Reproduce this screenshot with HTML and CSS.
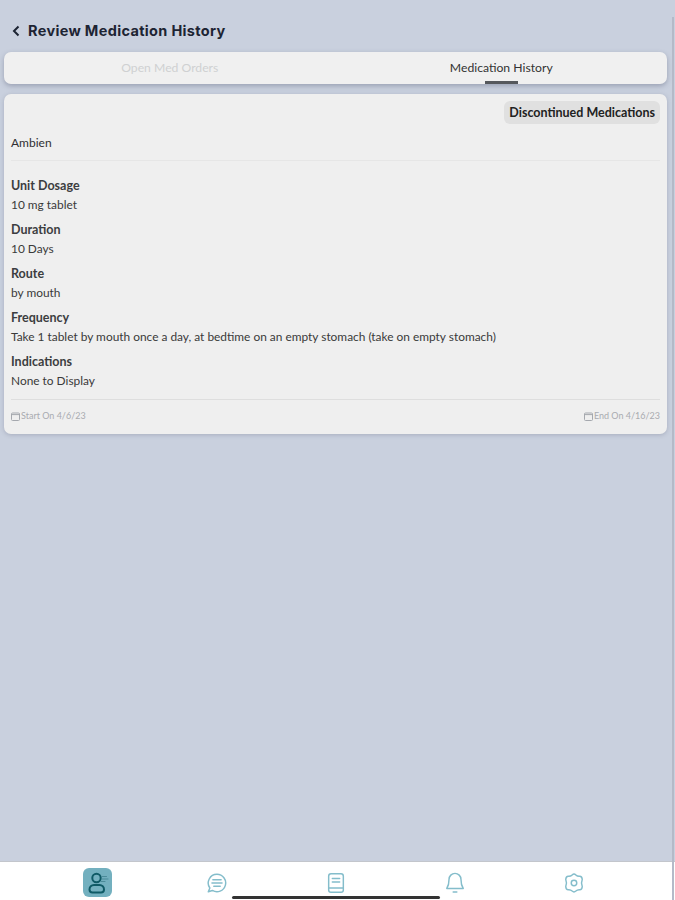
FILE: index.html
```html
<!DOCTYPE html>
<html lang="en">
<head>
  <meta charset="UTF-8" />
  <meta name="viewport" content="width=device-width, initial-scale=1.0" />
  <title>Review Medication History</title>
  <link rel="stylesheet" href="styles.css">
</head>
<body>
  <div class="screen">
    <header class="page-header">
      <svg class="back-icon" viewBox="0 0 10 12" width="10" height="12"><path d="M7.5 1.5 3 6l4.5 4.5" /></svg>
      <h1>Review Medication History</h1>
    </header>

    <nav class="tabs">
      <div class="tab">Open Med Orders</div>
      <div class="tab active">Medication History</div>
    </nav>

    <section class="med-card">
      <div class="card-top">
        <span class="status-pill">Discontinued Medications</span>
      </div>
      <div class="med-name">Ambien</div>

      <div class="details">
        <div class="field">
          <h3>Unit Dosage</h3>
          <p>10 mg tablet</p>
        </div>
        <div class="field">
          <h3>Duration</h3>
          <p>10 Days</p>
        </div>
        <div class="field">
          <h3>Route</h3>
          <p>by mouth</p>
        </div>
        <div class="field">
          <h3>Frequency</h3>
          <p>Take 1 tablet by mouth once a day, at bedtime on an empty stomach (take on empty stomach)</p>
        </div>
        <div class="field">
          <h3>Indications</h3>
          <p>None to Display</p>
        </div>
      </div>

      <div class="dates">
        <span class="date">
          <svg viewBox="0 0 9 9" width="9" height="9"><rect x="0.5" y="1" width="8" height="7.5" rx="1" /><path d="M0.5 2.6h8" /></svg>
          Start On 4/6/23
        </span>
        <span class="date">
          <svg viewBox="0 0 9 9" width="9" height="9"><rect x="0.5" y="1" width="8" height="7.5" rx="1" /><path d="M0.5 2.6h8" /></svg>
          End On 4/16/23
        </span>
      </div>
    </section>

    <footer class="tab-bar">
      <div class="nav-item current">
        <svg viewBox="0 0 24 24" width="24" height="24">
          <circle cx="10.500" cy="7" r="4.200" />
          <path d="M3.500 18.500c0-2.500 2-4.500 4.500-4.500h5.500c2.500 0 4.500 2 4.500 4.500 0 1.700-1.300 3-3 3H6.500c-1.700 0-3-1.300-3-3z" />
          <path d="M15.500 5.500h5M16 8h6M15 10.500h4" class="thin" />
        </svg>
      </div>
      <div class="nav-item">
        <svg viewBox="0 0 24 24" width="22" height="22">
          <path d="M12 2.500a9.500 9.500 0 1 1-5 17.600L2.500 21.500l1.700-4A9.500 9.500 0 0 1 12 2.500z" />
          <path d="M7.500 8.500h9M6.500 12h11M8.500 15.500h7" />
        </svg>
      </div>
      <div class="nav-item">
        <svg viewBox="0 0 24 24" width="22" height="22">
          <path d="M4 4.500A2.500 2.500 0 0 1 6.500 2h11A2.500 2.500 0 0 1 20 4.500v15a2.500 2.500 0 0 1-2.500 2.500h-11A2.500 2.500 0 0 1 4 19.500z" />
          <path d="M4 17.500h16M8 7h8M8 11h8" />
        </svg>
      </div>
      <div class="nav-item">
        <svg viewBox="0 0 24 24" width="22" height="22">
          <path d="M12 1.500a6.500 6.500 0 0 0-6.500 6.500c0 5-.800 7.500-2.500 10h18c-1.700-2.500-2.500-5-2.500-10A6.500 6.500 0 0 0 12 1.500z" />
          <path d="M10 21.800h4" />
        </svg>
      </div>
      <div class="nav-item">
        <svg viewBox="0 0 24 24" width="22" height="22">
          <path d="M10 3.200Q12 1.400 14 3.200 15.800 4.900 18.300 4.600 20.800 4.600 21 8.200 19.400 12 21 15.800 20.800 19.400 18.300 19.400 15.800 19.100 14 20.800 12 22.600 10 20.800 8.200 19.100 5.700 19.400 3.200 19.400 3 15.800 4.600 12 3 8.200 3.200 4.600 5.700 4.600 8.200 4.900 10 3.200z" />
          <circle cx="12" cy="12" r="3" />
        </svg>
      </div>
      <div class="home-indicator"></div>
    </footer>

    <div class="edge-line"></div>
  </div>
</body>
</html>
```

FILE: styles.css
```css
* {
  margin: 0;
  padding: 0;
  box-sizing: border-box;
}

body {
  background: #c9d0de;
  font-family: 'Lato', sans-serif;
  color: #2f3033;
  overflow: hidden;
}

.screen {
  height: 900px;
  display: flex;
  flex-direction: column;
  padding: 0 8px 0 4px;
  position: relative;
}

.page-header {
  height: 52px;
  padding: 22px 0 0 7px;
  display: flex;
  align-items: flex-start;
  gap: 7px;
}

.back-icon {
  margin-top: 3px;
}

.back-icon path {
  fill: none;
  stroke: #1d2433;
  stroke-width: 2;
}

.page-header h1 {
  font-family: 'Inter', sans-serif;
  font-size: 14.5px;
  line-height: 18px;
  font-weight: 700;
  color: #1d2433;
  letter-spacing: 0.33px;
}

.tabs {
  height: 32px;
  display: flex;
  background: #f0f0f0;
  border-radius: 7px;
  box-shadow: 0 2px 5px rgba(70, 75, 100, 0.35);
}

.tab {
  flex: 1;
  text-align: center;
  font-size: 12.2px;
  line-height: 32px;
  color: #cfd0d2;
  position: relative;
}

.tab.active {
  color: #333;
}

.tab.active::after {
  content: "";
  position: absolute;
  left: 50%;
  bottom: 0;
  width: 33px;
  height: 3px;
  margin-left: -16px;
  background: #55585c;
}

.med-card {
  margin-top: 10px;
  height: 340px;
  background: #efefef;
  border-radius: 7px;
  padding: 7px 7px 0;
  box-shadow: 0 1px 4px rgba(70, 75, 100, 0.25);
}

.card-top {
  display: flex;
  justify-content: flex-end;
}

.status-pill {
  background: #e0e0e0;
  border-radius: 6px;
  padding: 0 5px;
  font-size: 12.5px;
  line-height: 23px;
  font-weight: 700;
  color: #222;
}

.med-name {
  margin-top: 11px;
  padding-bottom: 9px;
  font-size: 12px;
  line-height: 16px;
  border-bottom: 1px solid #e6e6e6;
}

.details {
  padding-top: 14px;
  padding-bottom: 4px;
  border-bottom: 1px solid #dedede;
}

.field {
  height: 44px;
}

.field h3 {
  font-size: 12.5px;
  line-height: 22px;
  font-weight: 700;
  color: #3c3d40;
}

.field p {
  font-size: 11.9px;
  line-height: 16px;
  color: #3a3a3a;
}

.dates {
  display: flex;
  justify-content: space-between;
  padding-top: 9px;
}

.date {
  display: flex;
  align-items: center;
  font-size: 9px;
  line-height: 14px;
  color: #a9abb0;
}

.date svg {
  margin-right: 1px;
}

.date rect,
.date path {
  fill: none;
  stroke: #a5a8ae;
  stroke-width: 1;
}

.tab-bar {
  margin: auto -8px 0 -4px;
  height: 39px;
  background: #fff;
  border-top: 1px solid #c3c6cc;
  display: flex;
  gap: 90.1px;
  padding: 6px 0 0 83px;
  position: relative;
}

.nav-item {
  width: 29px;
  height: 29px;
  display: flex;
  align-items: center;
  justify-content: center;
  border-radius: 6px;
}

.nav-item.current {
  background: #73b0bf;
}

.nav-item svg {
  fill: none;
  stroke: #84bdcb;
  stroke-width: 1.600;
  stroke-linecap: round;
  stroke-linejoin: round;
}

.nav-item.current svg {
  stroke: #0f5a66;
  stroke-width: 2;
}

.nav-item.current .thin {
  stroke: #4a8a98;
  stroke-width: 1;
}

.home-indicator {
  position: absolute;
  left: 232px;
  bottom: 1px;
  width: 208px;
  height: 3px;
  border-radius: 2px;
  background: #333;
}

.edge-line {
  position: absolute;
  top: 17px;
  bottom: 0;
  right: 1px;
  width: 2px;
  background: #b4bac8;
}
```
